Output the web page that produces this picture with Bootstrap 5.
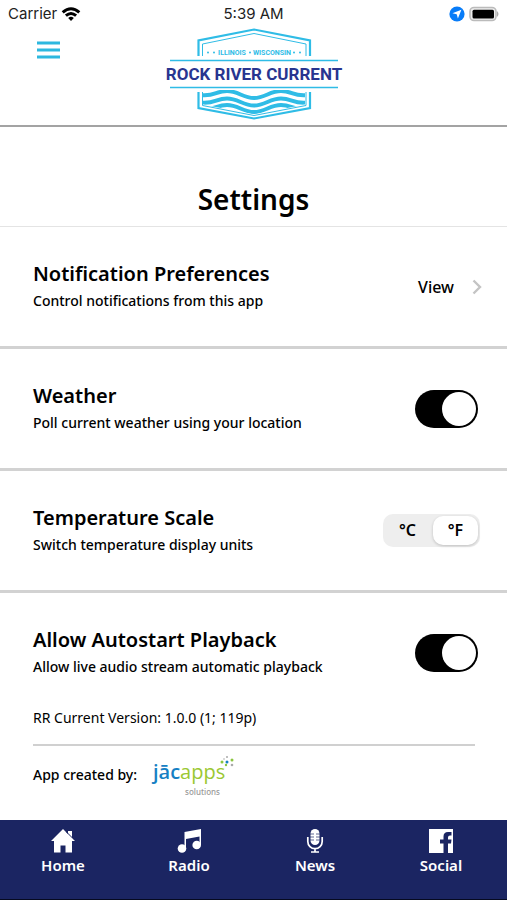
<!DOCTYPE html>
<html lang="en">
<head>
<meta charset="utf-8">
<meta name="viewport" content="width=device-width, initial-scale=1">
<title>Settings</title>
<link href="https://cdn.jsdelivr.net/npm/bootstrap@5.3.0/dist/css/bootstrap.min.css" rel="stylesheet">
<style>
body { font-family: "Noto Sans", sans-serif; color: #000; background: #fff; font-size: 14px; line-height: 24px; }
.status-bar { font: 15px/28px Inter, sans-serif; padding: 0 8px; color: #222; }
.status-side { flex: 1 1 0; }
.brand-bar { border-bottom: 2px solid #a3a3a3; padding-bottom: 5px; }
.brand-side { flex: 1 1 0; padding: 10px 0 0 36px; }
.menu-btn { line-height: 0; }
.page-title { font-size: 28px; line-height: 40px; font-weight: 600; padding: 52px 0 7px; border-bottom: 1px solid #e4e4e4; }
.setting { padding: 0 29px 0 33px; border-bottom: 3px solid #d2d2d2; }
.setting-text { padding: 33px 0 32px; }
.setting-text p { font-weight: 500; line-height: 26px; }
.setting h2 { font-size: 20px; line-height: 28px; font-weight: 600; }
.setting-last { border: 0; align-items: flex-start; }
.setting-last .setting-text { padding-bottom: 26px; }
.setting-last .form-switch { margin-top: 41px; }
.view-link { font-size: 16px; font-weight: 500; color: #000; gap: 18px; margin-right: -4px; }
.form-switch .power { width: 63px; height: 38px; margin: 0; border: 0; background-color: #000; background-size: 38px 38px;
  background-image: url("data:image/svg+xml,%3csvg xmlns='http://www.w3.org/2000/svg' viewBox='0 0 38 38'%3e%3ccircle cx='19' cy='19' r='17' fill='%23fff'/%3e%3c/svg%3e"); }
.form-switch .power:not(:checked) { background-color: #bbb; }
.form-switch .power:focus { box-shadow: 0 0 0 3px #2db8df66; }
.form-switch .power:not(:focus-visible) { box-shadow: none; }
.scale { background: #eee; border-radius: 10px; padding: 2px; margin-right: -2px; }
.scale .btn { width: 45px; padding: 0; font-size: 16px; line-height: 29px; font-weight: 600; border: 0; border-radius: 10px !important; color: #000; }
.scale .btn-check:checked + .btn { background: #fff; box-shadow: 0 1px 3px #0003; color: #000; }
.about { padding: 0 32px 0 33px; }
.credit { border-top: 2px solid #d0d0d0; margin-top: 14px; padding: 8px 0 20px; gap: 14px; font-weight: 500; }
.tab-bar { background: #1b2562; border-bottom: 1px solid #060a20; padding-right: 3px; }
.tab-bar .nav-link { flex: 1 1 0; color: #fff; font-size: 15px; line-height: 20px; font-weight: 600; padding: 8px 0 24px; }
.tab-bar svg { display: block; margin: 0 auto 1px; }
</style>
</head>
<body class="d-flex flex-column min-vh-100">
<div class="status-bar d-flex align-items-center">
  <div class="status-side d-flex align-items-center gap-1">Carrier
    <svg width="20" height="15" viewBox="0 0 20 15" fill="none" stroke="#000" stroke-width="3" aria-label="Wi-Fi"><path d="M1.7 5.4Q10-2 18.3 5.4M4.9 8.7Q10 4.3 15.1 8.7"/><path d="M7.2 11Q10 8.5 12.8 11L10 14Z" fill="#000" stroke="none"/></svg>
  </div>
  <div>5:39 AM</div>
  <div class="status-side d-flex justify-content-end align-items-center gap-1">
    <svg width="16" height="16" viewBox="0 0 16 16" aria-label="Location"><circle cx="8" cy="8" r="7.6" fill="#087cf8"/><path d="m12.4 3.7-3.5 8.8-1.2-4.2-4.3-1.1z" fill="#fff"/></svg>
    <svg width="30" height="16" viewBox="0 0 30 16" aria-label="Battery"><rect x="1" y="1.5" width="26" height="13" rx="4" fill="#eee" stroke="#bbb" stroke-width="1.6"/><rect x="3.5" y="3.7" width="21.5" height="8.8" rx="1.5"/><path d="M28 5q3 3 0 6z" fill="#aaa"/></svg>
  </div>
</div>
<header class="brand-bar d-flex align-items-start">
  <div class="brand-side"><button class="menu-btn btn p-0 border-0" type="button" aria-label="Menu">
    <svg width="24" height="24" viewBox="0 0 24 24" stroke="#2db8df" stroke-width="3"><path d="M1 4h23M1 11h23M1 18h23"/></svg></button></div>
  <svg width="180" height="92" viewBox="0 0 180 92" role="img" aria-label="Rock River Current, Illinois and Wisconsin">
    <defs><clipPath id="water"><path d="M39 62h102v14.500L90 86.500 39 76.500z"/></clipPath></defs>
    <g fill="none" stroke="#2fbce6" stroke-width="2.2">
      <path d="M34.500 28V12.500L90 1.500l56 11V28M34.500 64v16L90 90.500 146 80V64"/>
      <path stroke-width="1" d="M38.500 28V16L90 5.500 142 16v12M38.500 64v13.500L90 87.500l52-10V64"/>
      <path stroke-width="1.500" d="M6 32.500h168M6 59.500h168"/>
    </g>
    <g fill="none" stroke="#2fbce6" stroke-width="4" clip-path="url(#water)">
      <path d="M36 67c14 2 16-4 27-4s16 7 27 7 16-7 27-7 13 6 27 4"/>
      <path d="M36 74.500c14 2 16-4 27-4s16 7 27 7 16-7 27-7 13 6 27 4"/>
      <path d="M36 81c14 2 16-4 27-4s16 7 27 7 16-7 27-7 13 6 27 4"/>
    </g>
    <g fill="#2fbce6"><circle cx="44" cy="24.500" r="1"/><circle cx="50" cy="24.500" r="1"/><circle cx="86" cy="24.500" r="1"/><circle cx="130" cy="24.500" r="1"/><circle cx="136" cy="24.500" r="1"/></g>
    <g font-family="Roboto,sans-serif" font-weight="700">
      <g fill="#2fbce6" font-size="7"><text x="68" y="27" text-anchor="middle">ILLINOIS</text><text x="108" y="27" text-anchor="middle">WISCONSIN</text></g>
      <text x="90" y="52" text-anchor="middle" font-size="17" fill="#283590">ROCK RIVER CURRENT</text>
    </g>
  </svg>
  <div class="brand-side"></div>
</header>
<main class="flex-grow-1">
  <h1 class="page-title text-center m-0">Settings</h1>
  <section class="setting d-flex justify-content-between align-items-center">
    <div class="setting-text"><h2 class="m-0">Notification Preferences</h2><p class="m-0">Control notifications from this app</p></div>
    <a class="view-link d-flex align-items-center text-decoration-none" href="#notifications">View
      <svg width="10" height="16" viewBox="0 0 10 16" fill="none" stroke="#c4c4c4" stroke-width="2.400"><path d="m1.500 1.500 6.500 6.500-6.500 6.500"/></svg></a>
  </section>
  <section class="setting d-flex justify-content-between align-items-center">
    <div class="setting-text"><h2 class="m-0"><label for="weather">Weather</label></h2><p class="m-0">Poll current weather using your location</p></div>
    <div class="form-switch d-flex p-0"><input class="form-check-input power" type="checkbox" role="switch" id="weather" checked></div>
  </section>
  <section class="setting d-flex justify-content-between align-items-center">
    <div class="setting-text"><h2 class="m-0">Temperature Scale</h2><p class="m-0">Switch temperature display units</p></div>
    <div class="scale btn-group gap-1" role="group" aria-label="Temperature Scale">
      <input class="btn-check" type="radio" name="scale" id="celsius"><label class="btn" for="celsius">°C</label>
      <input class="btn-check" type="radio" name="scale" id="fahrenheit" checked><label class="btn" for="fahrenheit">°F</label>
    </div>
  </section>
  <section class="setting setting-last d-flex justify-content-between">
    <div class="setting-text"><h2 class="m-0"><label for="autostart">Allow Autostart Playback</label></h2><p class="m-0">Allow live audio stream automatic playback</p></div>
    <div class="form-switch d-flex p-0"><input class="form-check-input power" type="checkbox" role="switch" id="autostart" checked></div>
  </section>
  <section class="about">
    <p class="m-0">RR Current Version: 1.0.0 (1; 119p)</p>
    <div class="credit d-flex align-items-center">
      <span>App created by:</span>
      <svg width="84" height="42" viewBox="0 0 84 42" role="img" aria-label="jācapps solutions">
        <text x="2" y="25" font-family="'Open Sans',sans-serif" font-size="20" fill="#9bc832"><tspan font-weight="600" fill="#1680c4">jāc</tspan>apps</text>
        <text x="34" y="41" font-family="'Noto Sans',sans-serif" font-size="8" fill="#999">solutions</text>
        <g fill="#8bc53f"><circle cx="71" cy="8" r="1.500"/><circle cx="81" cy="6" r="1.500"/><circle cx="75" cy="11" r="1.200"/></g>
        <g fill="#1680c4"><circle cx="76" cy="8" r="1.500"/></g>
        <g fill="#aaa"><circle cx="76" cy="3" r="1"/><circle cx="81" cy="11" r="1.300"/><circle cx="73" cy="5" r=".8"/></g>
      </svg>
    </div>
  </section>
</main>
<nav class="tab-bar nav flex-nowrap text-center" aria-label="Main">
  <a class="nav-link" href="#home"><svg width="26" height="26" viewBox="0 0 26 26" fill="#fff"><path d="M13 1 1 13h3v11.500h6.500v-7h5v7H22V13h3l-3-3V3h-4v3z"/><path d="m16.500 4 6 6" stroke="#1b2562" fill="none"/></svg>Home</a>
  <a class="nav-link" href="#radio"><svg width="26" height="26" viewBox="0 0 26 26" fill="#fff"><path d="M8.500 4 25 1v16h-1.500V8.500L10 11v9H8.500z"/><circle cx="6" cy="20.500" r="4.300"/><circle cx="20.700" cy="17" r="4.300"/></svg>Radio</a>
  <a class="nav-link" href="#news"><svg width="26" height="26" viewBox="0 0 26 26"><rect x="8.500" y="1" width="9" height="16" rx="4.500" fill="#fff"/><path d="M8 6h4M8 9h4M8 12h4M14 6h4M14 9h4M14 12h4" stroke="#1b2562" stroke-width=".7"/><path d="M5.800 9v4.500a7.200 7.200 0 0 0 14.400 0V9M13 20v3.500M9 24h8" fill="none" stroke="#fff" stroke-width="1.700"/></svg>News</a>
  <a class="nav-link" href="#social"><svg width="26" height="26" viewBox="0 0 26 26"><path d="M1 1h24v24h-5v-9.500h3l.5-4H20V9.500q0-2 2-2h1.500V4H20q-4.500 0-4.500 4.500v3H12v4h3.500V25H1z" fill="#fff"/></svg>Social</a>
</nav>
<script src="https://cdn.jsdelivr.net/npm/bootstrap@5.3.0/dist/js/bootstrap.bundle.min.js"></script>
</body>
</html>
